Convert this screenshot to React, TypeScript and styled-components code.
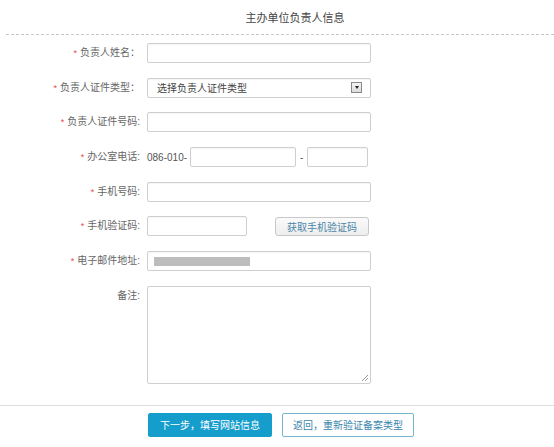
import styled, { createGlobalStyle } from 'styled-components';

const GlobalStyle = createGlobalStyle`
  html, body {
    margin: 0;
    padding: 0;
    background: #fff;
    font-family: "Liberation Sans", Arial, "Noto Sans CJK SC", sans-serif;
    color: #444;
  }
`;

const Page = styled.div`
  width: 554px;
  height: 447px;
  overflow: hidden;
`;

const Header = styled.div`
  display: flex;
  justify-content: center;
  padding: 12px 0 0 36px;
  height: 34px;
  line-height: 13px;
  box-sizing: border-box;
  font-size: 11px;
  color: #444;
`;

const Dashed = styled.div`
  margin-left: 6px;
  border-top: 1px dashed #c8c8c8;
`;

const Form = styled.div`
  display: flex;
  flex-direction: column;
  gap: 14.7px;
  padding-top: 8px;
`;

const Row = styled.div<{ $top?: boolean }>`
  display: grid;
  grid-template-columns: 140px 1fr;
  column-gap: 7px;
  align-items: ${p => (p.$top ? 'start' : 'center')};
`;

const Label = styled.div`
  text-align: right;
  font-size: 10px;
  color: #666;
  white-space: nowrap;
  line-height: 20px;
`;

const Star = styled.span`
  color: #e24b4b;
  margin-right: 3px;
  font-size: 9px;
`;

const Controls = styled.div`
  display: flex;
  align-items: center;
`;

const Input = styled.div<{ $w: number; $ml?: number }>`
  width: ${p => p.$w}px;
  height: 20px;
  margin-left: ${p => p.$ml ?? 0}px;
  box-sizing: border-box;
  border: 1px solid #cfcfcf;
  border-radius: 2px;
  background: #fff;
  box-shadow: inset 0 1px 1px rgba(0, 0, 0, 0.04);
  display: flex;
  align-items: center;
  padding: 0 9px;
  font-size: 10px;
  color: #444;
  position: relative;
`;

const Arrow = styled.div`
  position: absolute;
  right: 8px;
  top: 3px;
  width: 11px;
  height: 11px;
  box-sizing: border-box;
  border: 1px solid #888;
  background: linear-gradient(#f4f4f4, #dcdcdc);
  display: flex;
  align-items: center;
  justify-content: center;

  &::after {
    content: '';
    border-left: 2.5px solid transparent;
    border-right: 2.5px solid transparent;
    border-top: 3px solid #222;
  }
`;

const Plain = styled.span<{ $mx?: number }>`
  font-size: 10px;
  color: #555;
  margin: 0 ${p => p.$mx ?? 0}px;
`;

const Blur = styled.div`
  width: 96px;
  height: 9px;
  margin-left: -3px;
  background: #bdbdbd;
`;

const CodeButton = styled.div`
  margin-left: 28px;
  width: 94px;
  height: 19px;
  box-sizing: border-box;
  border: 1px solid #c8c8c8;
  border-radius: 3px;
  background: linear-gradient(#fafafa, #eeeeee);
  color: #4a86a8;
  font-size: 10px;
  display: flex;
  align-items: center;
  justify-content: center;
`;

const TextArea = styled.div`
  width: 224px;
  height: 98px;
  box-sizing: border-box;
  border: 1px solid #cfcfcf;
  border-radius: 2px;
  position: relative;

  &::after {
    content: '';
    position: absolute;
    right: 2px;
    bottom: 2px;
    width: 6px;
    height: 6px;
    background: linear-gradient(135deg, transparent 45%, #999 45%, #999 55%, transparent 55%, transparent 70%, #999 70%, #999 80%, transparent 80%);
  }
`;

const Footer = styled.div`
  margin-top: 21px;
  border-top: 1px solid #dedede;
  display: flex;
  gap: 10px;
  padding: 7px 0 0 148px;
`;

const Button = styled.div<{ $primary?: boolean; $w: number }>`
  width: ${p => p.$w}px;
  height: 24px;
  box-sizing: border-box;
  border-radius: 2px;
  display: flex;
  align-items: center;
  justify-content: center;
  font-size: 10px;
  background: ${p => (p.$primary ? '#159dcc' : '#fff')};
  color: ${p => (p.$primary ? '#fff' : '#3a86ad')};
  border: 1px solid ${p => (p.$primary ? '#159dcc' : '#74b6d0')};
`;

export default function App() {
  return (
    <Page>
      <GlobalStyle />
      <Header>主办单位负责人信息</Header>
      <Dashed />
      <Form>
        <Row>
          <Label><Star>*</Star>负责人姓名：</Label>
          <Controls><Input $w={224} /></Controls>
        </Row>
        <Row>
          <Label><Star>*</Star>负责人证件类型：</Label>
          <Controls>
            <Input $w={224}>选择负责人证件类型<Arrow /></Input>
          </Controls>
        </Row>
        <Row>
          <Label><Star>*</Star>负责人证件号码:</Label>
          <Controls><Input $w={224} /></Controls>
        </Row>
        <Row>
          <Label><Star>*</Star>办公室电话:</Label>
          <Controls>
            <Plain>086-010-</Plain>
            <Input $w={106} $ml={3} />
            <Plain $mx={4}>-</Plain>
            <Input $w={61} />
          </Controls>
        </Row>
        <Row>
          <Label><Star>*</Star>手机号码:</Label>
          <Controls><Input $w={224} /></Controls>
        </Row>
        <Row>
          <Label><Star>*</Star>手机验证码:</Label>
          <Controls>
            <Input $w={100} />
            <CodeButton>获取手机验证码</CodeButton>
          </Controls>
        </Row>
        <Row>
          <Label><Star>*</Star>电子邮件地址:</Label>
          <Controls>
            <Input $w={224}><Blur /></Input>
          </Controls>
        </Row>
        <Row $top>
          <Label>备注:</Label>
          <Controls><TextArea /></Controls>
        </Row>
      </Form>
      <Footer>
        <Button $primary $w={124}>下一步，填写网站信息</Button>
        <Button $w={132}>返回，重新验证备案类型</Button>
      </Footer>
    </Page>
  );
}
